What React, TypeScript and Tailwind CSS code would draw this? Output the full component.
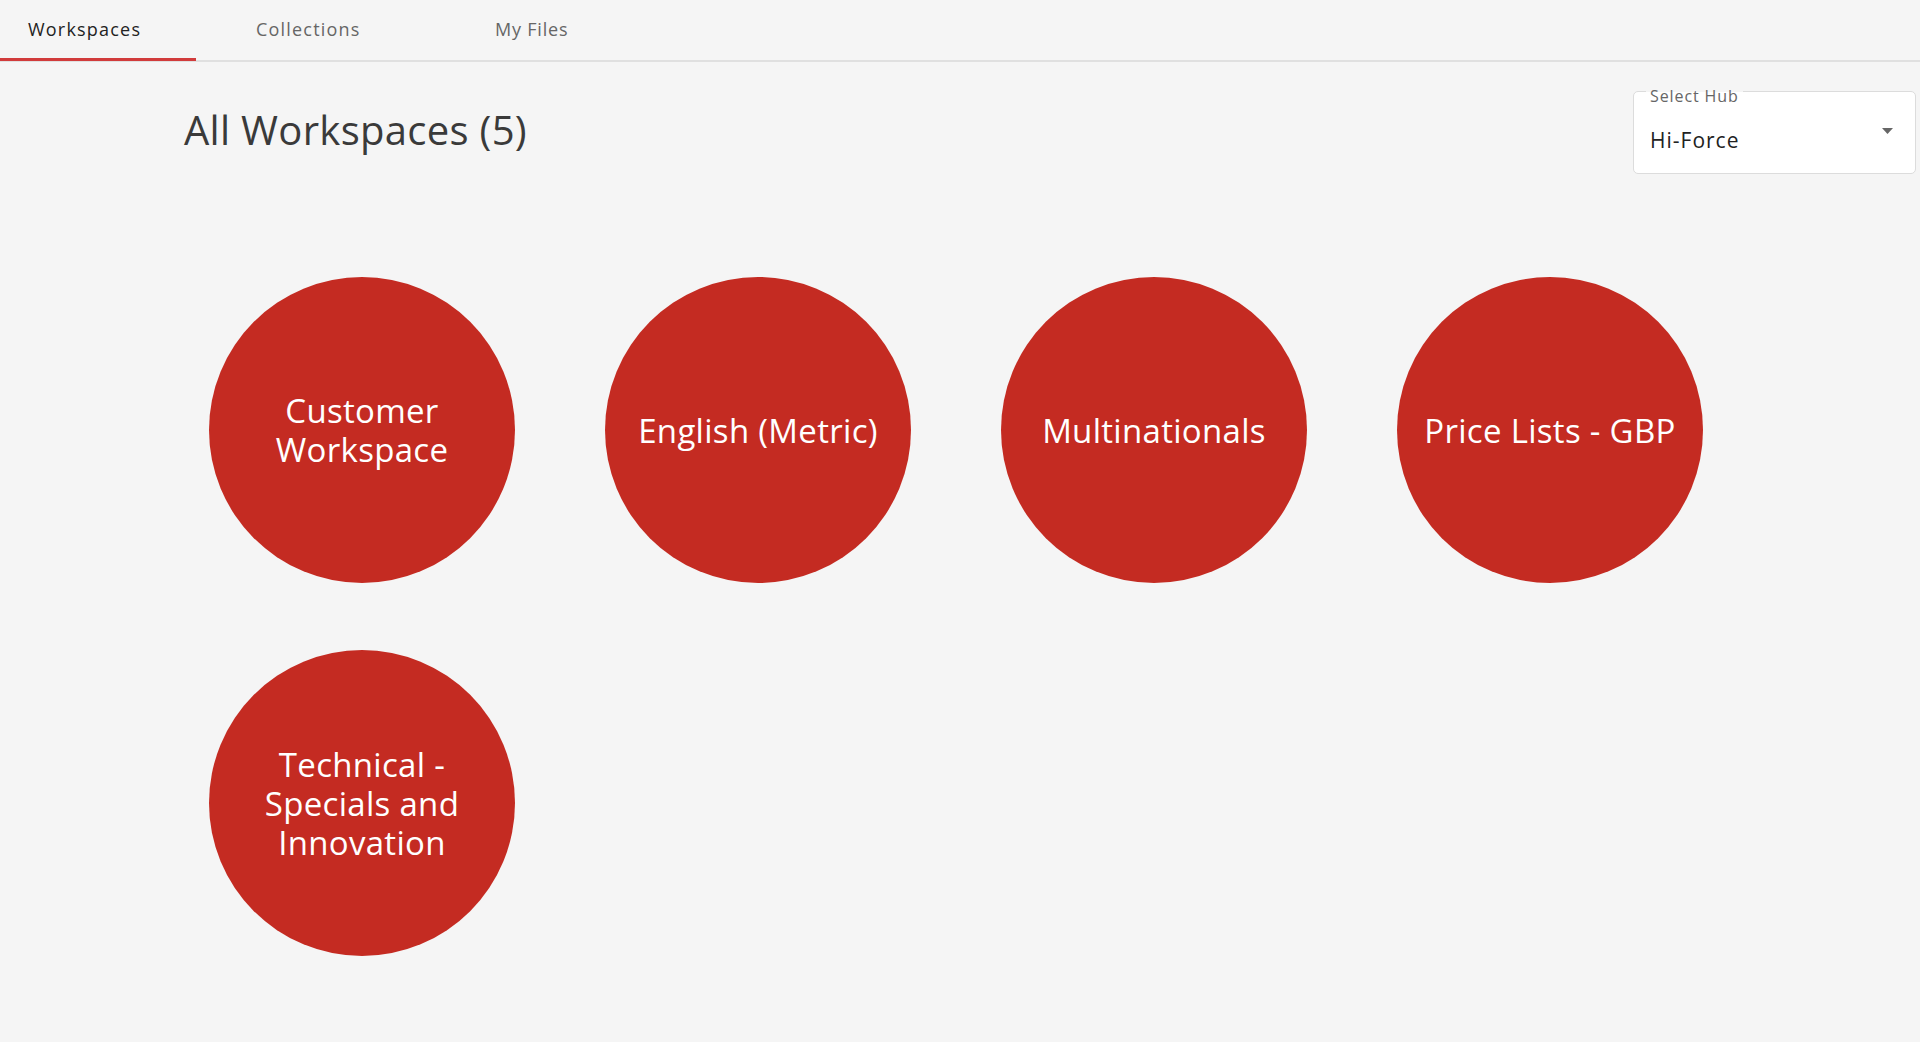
import React from "react";

const font = { fontFamily: '"Open Sans", "Liberation Sans", sans-serif' };

const workspaces = [
  "Customer\nWorkspace",
  "English (Metric)",
  "Multinationals",
  "Price Lists - GBP",
  "Technical -\nSpecials and\nInnovation",
];

export default function App() {
  return (
    <div className="min-h-[1042px] w-full bg-[#f5f5f5] text-[#333]" style={font}>
      {/* Tabs */}
      <div className="flex h-[62px] border-b-2 border-[#e0e0e0] pb-[2px]">
        <div className="relative flex w-[196px] items-center pl-[28px] text-[18px] tracking-[1.2px] text-[#222]">
          Workspaces
          <div className="absolute bottom-[-3px] left-0 h-[3px] w-full bg-[#d13b3b]" />
        </div>
        <div className="flex w-[224px] items-center pl-[60px] text-[18px] tracking-[1.2px] text-[#666]">Collections</div>
        <div className="flex w-[224px] items-center pl-[75px] text-[18px] tracking-[0.8px] text-[#666]">My Files</div>
      </div>

      {/* Header */}
      <div className="mt-[29px] flex h-[83px] items-center justify-between pr-[4px]">
        <h1 className="mb-[6px] pl-[184px] text-[40px] font-normal leading-none tracking-[0.3px] text-[#3a3a3a]">
          All Workspaces (5)
        </h1>
        <div className="relative h-[83px] w-[283px] rounded-[5px] border border-[#dcdcdc] bg-white">
          <span className="absolute left-[12px] top-[-5px] bg-[linear-gradient(to_bottom,#f5f5f5_5px,#ffffff_5px)] px-[4px] text-[16px] leading-[18px] tracking-[0.9px] text-[#666]">
            Select Hub
          </span>
          <div className="flex h-full items-center justify-between pl-[16px] pr-[22px] pt-[16px]">
            <span className="text-[21px] tracking-[1px] text-[#222]">Hi-Force</span>
            <svg width="11" height="6" viewBox="0 0 11 6" className="mb-[20px]">
              <path d="M0 0 L11 0 L5.5 6 Z" fill="#666" />
            </svg>
          </div>
        </div>
      </div>

      {/* Circles */}
      <div className="mt-[103px] grid w-fit grid-cols-[repeat(4,306px)] gap-x-[90px] gap-y-[67px] pl-[209px]">
        {workspaces.map((label, i) => (
          <div
            key={i}
            className="flex h-[306px] w-[306px] cursor-pointer items-center justify-center rounded-full bg-[#c42b22] text-center text-[33px] leading-[39px] tracking-[0.3px] whitespace-pre-line text-white"
          >
            {label}
          </div>
        ))}
      </div>
    </div>
  );
}
